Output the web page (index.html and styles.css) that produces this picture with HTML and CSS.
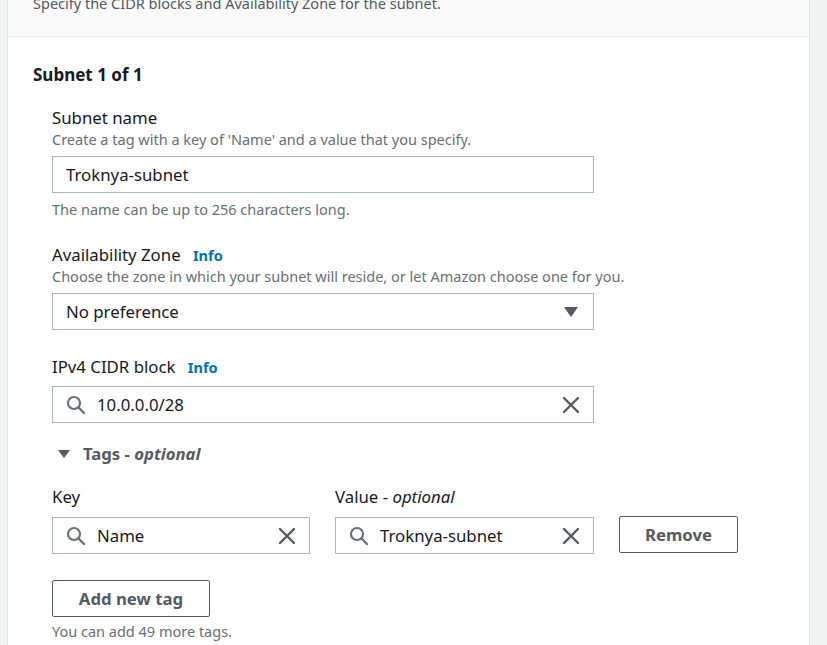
FILE: index.html
```html
<!DOCTYPE html>
<html>
<head>
<meta charset="utf-8">
<link rel="stylesheet" href="styles.css">
</head>
<body>
<div class="card">
  <div class="card-header">
    <p class="header-desc">Specify the CIDR blocks and Availability Zone for the subnet.</p>
  </div>
  <div class="card-body">
    <h2 class="subnet-title">Subnet 1 of 1</h2>
    <div class="fields">
      <div class="field">
        <div class="label">Subnet name</div>
        <div class="desc">Create a tag with a key of 'Name' and a value that you specify.</div>
        <div class="input input-wide"><span class="value">Troknya-subnet</span></div>
        <div class="hint">The name can be up to 256 characters long.</div>
      </div>
      <div class="field">
        <div class="label">Availability Zone <span class="info">Info</span></div>
        <div class="desc">Choose the zone in which your subnet will reside, or let Amazon choose one for you.</div>
        <div class="input input-wide select"><span class="value">No preference</span>
          <svg class="caret" width="14" height="10" viewBox="0 0 14 10"><path d="M0 0 H14 L7 10 Z" fill="#545b64"/></svg>
        </div>
      </div>
      <div class="field field-cidr">
        <div class="label">IPv4 CIDR block <span class="info">Info</span></div>
        <div class="input input-wide search">
          <svg class="search-icon" width="20" height="20" viewBox="0 0 20 20"><circle cx="8" cy="8" r="6" fill="none" stroke="#687078" stroke-width="2.2"/><path d="M12.5 12.5 L18 18" stroke="#687078" stroke-width="2.4" stroke-linecap="round"/></svg>
          <span class="value">10.0.0.0/28</span>
          <svg class="clear-icon" width="18" height="18" viewBox="0 0 18 18"><path d="M2 2 L16 16 M16 2 L2 16" stroke="#545b64" stroke-width="2.4" stroke-linecap="round"/></svg>
        </div>
      </div>
      <div class="tags-toggle">
        <svg class="tags-caret" width="12" height="10" viewBox="0 0 12 10"><path d="M0 1 H12 L6 9 Z" fill="#545b64"/></svg>
        <span>Tags - <em>optional</em></span>
      </div>
      <div class="tag-row">
        <div class="tag-col key-col">
          <div class="label">Key</div>
          <div class="input search">
            <svg class="search-icon" width="20" height="20" viewBox="0 0 20 20"><circle cx="8" cy="8" r="6" fill="none" stroke="#687078" stroke-width="2.2"/><path d="M12.5 12.5 L18 18" stroke="#687078" stroke-width="2.4" stroke-linecap="round"/></svg>
            <span class="value">Name</span>
            <svg class="clear-icon" width="18" height="18" viewBox="0 0 18 18"><path d="M2 2 L16 16 M16 2 L2 16" stroke="#545b64" stroke-width="2.4" stroke-linecap="round"/></svg>
          </div>
        </div>
        <div class="tag-col value-col">
          <div class="label">Value - <em>optional</em></div>
          <div class="input search">
            <svg class="search-icon" width="20" height="20" viewBox="0 0 20 20"><circle cx="8" cy="8" r="6" fill="none" stroke="#687078" stroke-width="2.2"/><path d="M12.5 12.5 L18 18" stroke="#687078" stroke-width="2.4" stroke-linecap="round"/></svg>
            <span class="value">Troknya-subnet</span>
            <svg class="clear-icon" width="18" height="18" viewBox="0 0 18 18"><path d="M2 2 L16 16 M16 2 L2 16" stroke="#545b64" stroke-width="2.4" stroke-linecap="round"/></svg>
          </div>
        </div>
        <button class="btn remove-btn">Remove</button>
      </div>
      <button class="btn add-btn">Add new tag</button>
      <div class="hint hint-tags">You can add 49 more tags.</div>
    </div>
  </div>
</div>
</body>
</html>
```
FILE: styles.css
```css
* { box-sizing: border-box; }
html, body { margin: 0; padding: 0; }
body {
  background: #f2f3f3;
  font-family: "Noto Sans", "Open Sans", sans-serif;
  color: #16191f;
  height: 645px;
  overflow: hidden;
}
.card {
  margin-left: 7px;
  width: 803px;
  background: #fff;
  border-left: 1px solid #dfe3e3;
  border-right: 1px solid #dfe3e3;
  min-height: 700px;
}
.card-header {
  background: #fafafa;
  height: 37px;
  border-bottom: 1px solid #e4e8e8;
  padding: 0 25px;
}
.header-desc {
  margin: 0;
  position: relative;
  top: -8px;
  font-size: 14.5px;
  line-height: 22px;
  color: #545b64;
}
.card-body {
  padding: 26px 25px 0 25px;
}
.subnet-title {
  margin: 0;
  font-size: 17px;
  line-height: 24px;
  font-weight: 700;
}
.fields {
  padding-left: 19px;
  padding-top: 20px;
}
.field { margin-bottom: 25px; }
.field-cidr { margin-top: 26px; }
.label {
  font-size: 16.8px;
  line-height: 22px;
  color: #16191f;
}
.label em { font-style: italic; }
.info {
  font-size: 14.5px;
  font-weight: 700;
  color: #0073bb;
  margin-left: 8px;
}
.desc {
  font-size: 14.5px;
  line-height: 20px;
  color: #687078;
}
.hint {
  font-size: 14.5px;
  line-height: 20px;
  color: #687078;
  margin-top: 6px;
}
.hint-tags { margin-top: 4px; }
.input {
  margin-top: 7px;
  height: 37px;
  border: 1px solid #aab7b8;
  display: flex;
  align-items: center;
  padding: 0 13px;
  font-size: 16.8px;
  color: #16191f;
  background: #fff;
}
.input-wide { width: 542px; }
.input .value { flex: 1; }
.select { margin-top: 7px; }
.select .caret { margin-right: 2px; }
.search { padding: 0 13px 0 13px; }
.search-icon { margin-right: 11px; }
.field .search { margin-top: 8px; }
.tags-toggle {
  display: flex;
  align-items: center;
  font-size: 16.7px;
  line-height: 22px;
  font-weight: 700;
  color: #545b64;
  margin-top: -5px;
  padding-left: 6px;
}
.tags-toggle em { font-style: italic; }
.tags-caret { margin-right: 13px; }
.tag-row {
  display: flex;
  align-items: flex-end;
  gap: 25px;
  margin-top: 21px;
}
.tag-row .input { margin-top: 9px; }
.key-col { width: 258px; }
.value-col { width: 259px; }
.btn {
  font-family: "Noto Sans", "Open Sans", sans-serif;
  font-size: 16.8px;
  font-weight: 700;
  color: #545b64;
  background: #fff;
  border: 1px solid #545b64;
  border-radius: 2px;
  height: 37px;
  padding: 0 10px;
  cursor: pointer;
}
.remove-btn { width: 119px; margin-bottom: 1px; }
.add-btn { margin-top: 26px; width: 158px; }
```
